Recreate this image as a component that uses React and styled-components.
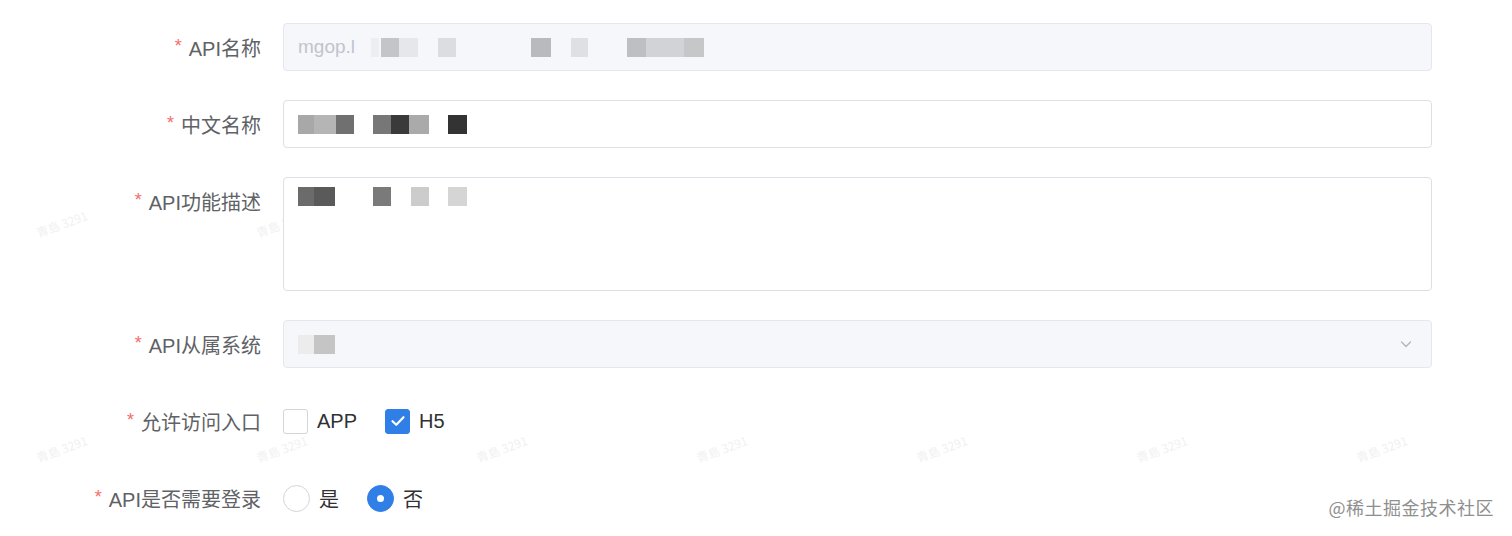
import React from "react";
import styled, { createGlobalStyle } from "styled-components";

const Global = createGlobalStyle`
  html, body { margin: 0; padding: 0; background: #ffffff; }
  body { font-family: "Liberation Sans", "Noto Sans CJK SC", sans-serif; }
`;

const Page = styled.div`
  position: relative;
  width: 1512px;
  height: 536px;
  overflow: hidden;
  background: #fff;
  padding-top: 23px;
  box-sizing: border-box;
`;

const Form = styled.div`
  display: flex;
  flex-direction: column;
  gap: 29px;
  width: 1432px;
`;

const Row = styled.div`
  display: grid;
  grid-template-columns: 283px 1149px;
  align-items: start;
`;

const Label = styled.div`
  height: 48px;
  display: flex;
  align-items: center;
  justify-content: flex-end;
  padding-right: 22px;
  font-size: 20px;
  color: #606266;
  white-space: nowrap;
`;

const Star = styled.span`
  color: #f56c6c;
  margin-right: 7px;
  font-size: 18px;
  position: relative;
  top: -1px;
`;

const Field = styled.div`
  height: ${(p) => p.$h || 48}px;
  box-sizing: border-box;
  border: 1px solid ${(p) => (p.$disabled ? "#e4e7ed" : "#dcdfe6")};
  background: ${(p) => (p.$disabled ? "#f5f7fa" : "#ffffff")};
  border-radius: 4px;
  display: flex;
  align-items: ${(p) => (p.$top ? "flex-start" : "center")};
  padding: ${(p) => (p.$top ? "9px" : "0")} 14px 0 14px;
  position: relative;
  z-index: 1;
`;

const Value = styled.span`
  font-size: 19px;
  color: ${(p) => p.$color || "#c0c4cc"};
  margin-right: 4px;
`;

const Mosaic = styled.div`
  display: flex;
  align-items: center;
`;

const Cell = styled.span`
  display: inline-block;
  width: ${(p) => p.$w}px;
  height: ${(p) => p.$h || 19}px;
  margin-left: ${(p) => p.$ml || 0}px;
  background: ${(p) => p.$c};
`;

const Chevron = styled.svg`
  margin-left: auto;
  margin-right: 4px;
`;

const Options = styled.div`
  height: 48px;
  display: flex;
  align-items: center;
  gap: 28px;
`;

const Option = styled.label`
  display: flex;
  align-items: center;
  gap: 9px;
  font-size: 20px;
  color: #303133;
`;

const Box = styled.span`
  width: 25px;
  height: 25px;
  box-sizing: border-box;
  border-radius: 3px;
  border: 1px solid ${(p) => (p.$on ? "#2f7fe6" : "#d3d5da")};
  background: ${(p) => (p.$on ? "#2f7fe6" : "#fff")};
  display: flex;
  align-items: center;
  justify-content: center;
`;

const Radio = styled.span`
  width: 27px;
  height: 27px;
  box-sizing: border-box;
  border-radius: 50%;
  border: 1px solid ${(p) => (p.$on ? "#2f7fe6" : "#d3d5da")};
  background: ${(p) => (p.$on ? "#2f7fe6" : "#fff")};
  display: flex;
  align-items: center;
  justify-content: center;
  &::after {
    content: "";
    width: 7px;
    height: 7px;
    border-radius: 50%;
    background: ${(p) => (p.$on ? "#fff" : "transparent")};
  }
`;

const Watermark = styled.div`
  position: absolute;
  right: 18px;
  bottom: 16px;
  font-size: 18px;
  color: #8f8f8f;
  font-family: "Noto Sans CJK SC", sans-serif;
  letter-spacing: 0.5px;
`;

const Faint = styled.div`
  position: absolute;
  left: ${(p) => p.$x}px;
  top: ${(p) => p.$y}px;
  transform: rotate(-20deg);
  font-size: 12px;
  color: #f1f1f1;
  white-space: nowrap;
  font-family: "Noto Sans CJK SC", sans-serif;
  pointer-events: none;
`;

const Check = () => (
  <svg width="18" height="18" viewBox="0 0 18 18">
    <path d="M3.5 9.2 L7.3 12.8 L14.5 5.2" fill="none" stroke="#fff" strokeWidth="2.2" strokeLinecap="round" strokeLinejoin="round" />
  </svg>
);

const FormLabel = ({ children }) => (
  <Label>
    <Star>*</Star>
    {children}
  </Label>
);

const Cells = ({ cells }) => (
  <Mosaic>
    {cells.map(([ml, w, c], i) => (
      <Cell key={i} $ml={ml} $w={w} $c={c} />
    ))}
  </Mosaic>
);

const marks = [
  [35, 215], [255, 215], [475, 215], [695, 215], [915, 215], [1135, 215], [1355, 215],
  [35, 440], [255, 440], [475, 440], [695, 440], [915, 440], [1135, 440], [1355, 440],
];

export default function App() {
  return (
    <Page>
      <Global />
      {marks.map(([x, y], i) => (
        <Faint key={i} $x={x} $y={y}>青島 3291</Faint>
      ))}
      <Form>
        <Row>
          <FormLabel>API名称</FormLabel>
          <Field $disabled>
            <Value>mgop.l</Value>
            <Cells
              cells={[
                [12, 8, "#eceef2"],
                [2, 18, "#c4c5c9"],
                [0, 19, "#e6e7ea"],
                [20, 18, "#dcdde0"],
                [75, 20, "#b9babd"],
                [20, 17, "#dfe0e3"],
                [39, 19, "#bebfc2"],
                [0, 38, "#d2d3d6"],
                [0, 20, "#c6c7c9"],
              ]}
            />
          </Field>
        </Row>
        <Row>
          <FormLabel>中文名称</FormLabel>
          <Field>
            <Cells
              cells={[
                [0, 16, "#a8a8a8"],
                [0, 22, "#b5b5b5"],
                [0, 18, "#707070"],
                [19, 18, "#777777"],
                [0, 18, "#3a3a3a"],
                [0, 20, "#aaaaaa"],
                [19, 19, "#333333"],
              ]}
            />
          </Field>
        </Row>
        <Row>
          <FormLabel>API功能描述</FormLabel>
          <Field $h={114} $top>
            <Cells
              cells={[
                [0, 16, "#6b6b6b"],
                [0, 21, "#5a5a5a"],
                [38, 18, "#7a7a7a"],
                [20, 18, "#cccccc"],
                [19, 19, "#d5d5d5"],
              ]}
            />
          </Field>
        </Row>
        <Row>
          <FormLabel>API从属系统</FormLabel>
          <Field $disabled>
            <Cells
              cells={[
                [0, 16, "#ececec"],
                [0, 21, "#c5c5c5"],
              ]}
            />
            <Chevron width="14" height="14" viewBox="0 0 14 14">
              <path d="M2.5 5 L7 9.5 L11.5 5" fill="none" stroke="#b4b7bd" strokeWidth="1.4" strokeLinecap="round" strokeLinejoin="round" />
            </Chevron>
          </Field>
        </Row>
        <Row>
          <FormLabel>允许访问入口</FormLabel>
          <Options>
            <Option>
              <Box />
              APP
            </Option>
            <Option>
              <Box $on>
                <Check />
              </Box>
              H5
            </Option>
          </Options>
        </Row>
        <Row>
          <FormLabel>API是否需要登录</FormLabel>
          <Options>
            <Option>
              <Radio />
              是
            </Option>
            <Option>
              <Radio $on />
              否
            </Option>
          </Options>
        </Row>
      </Form>
      <Watermark>@稀土掘金技术社区</Watermark>
    </Page>
  );
}
